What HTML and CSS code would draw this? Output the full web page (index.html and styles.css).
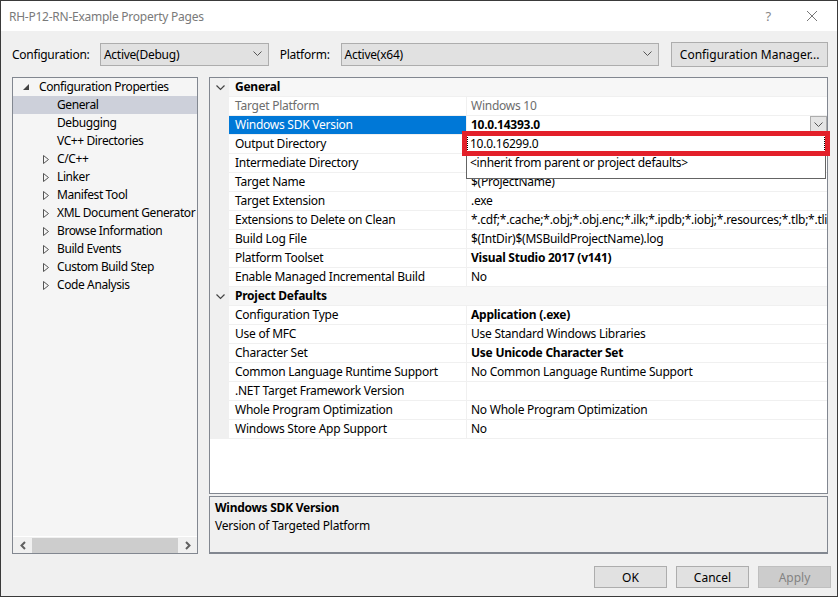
FILE: index.html
```html
<!DOCTYPE html>
<html lang="en">
  <head>
    <meta charset="UTF-8" />
    <title>RH-P12-RN-Example Property Pages</title>
    <link rel="stylesheet" href="styles.css">
  </head>
  <body>
    <div class="window">
      <header class="titlebar">
        <span class="title">RH-P12-RN-Example Property Pages</span>
        <span class="help">?</span>
        <svg class="close" width="12" height="12" viewBox="0 0 12 12">
          <path d="M1 1L11 11M11 1L1 11" stroke="#777" stroke-width="1" fill="none" />
        </svg>
      </header>

      <div class="content">
        <div class="toolbar">
          <label class="lbl-config">Configuration:</label>
          <div class="select select-config">
            <span>Active(Debug)</span>
            <svg width="9" height="6" viewBox="0 0 9 6"><path d="M0.5 0.5L4.5 4.5L8.5 0.5" stroke="#555" fill="none" /></svg>
          </div>
          <label class="lbl-platform">Platform:</label>
          <div class="select select-platform">
            <span>Active(x64)</span>
            <svg width="9" height="6" viewBox="0 0 9 6"><path d="M0.5 0.5L4.5 4.5L8.5 0.5" stroke="#555" fill="none" /></svg>
          </div>
          <button class="btn btn-manager">Configuration Manager...</button>
        </div>

        <div class="main">
          <aside class="tree">
            <ul>
              <li class="node root">
                <svg class="exp" width="7" height="7" viewBox="0 0 7 7"><polygon points="6,0 6,6 0,6" fill="#444" /></svg>
                Configuration Properties
              </li>
              <li class="node leaf selected">General</li>
              <li class="node leaf">Debugging</li>
              <li class="node leaf">VC++ Directories</li>
              <li class="node child"><svg class="col" width="6" height="9" viewBox="0 0 6 9"><polygon points="0.5,0.5 5.5,4.5 0.5,8.5" fill="none" stroke="#555" /></svg>C/C++</li>
              <li class="node child"><svg class="col" width="6" height="9" viewBox="0 0 6 9"><polygon points="0.5,0.5 5.5,4.5 0.5,8.5" fill="none" stroke="#555" /></svg>Linker</li>
              <li class="node child"><svg class="col" width="6" height="9" viewBox="0 0 6 9"><polygon points="0.5,0.5 5.5,4.5 0.5,8.5" fill="none" stroke="#555" /></svg>Manifest Tool</li>
              <li class="node child"><svg class="col" width="6" height="9" viewBox="0 0 6 9"><polygon points="0.5,0.5 5.5,4.5 0.5,8.5" fill="none" stroke="#555" /></svg>XML Document Generator</li>
              <li class="node child"><svg class="col" width="6" height="9" viewBox="0 0 6 9"><polygon points="0.5,0.5 5.5,4.5 0.5,8.5" fill="none" stroke="#555" /></svg>Browse Information</li>
              <li class="node child"><svg class="col" width="6" height="9" viewBox="0 0 6 9"><polygon points="0.5,0.5 5.5,4.5 0.5,8.5" fill="none" stroke="#555" /></svg>Build Events</li>
              <li class="node child"><svg class="col" width="6" height="9" viewBox="0 0 6 9"><polygon points="0.5,0.5 5.5,4.5 0.5,8.5" fill="none" stroke="#555" /></svg>Custom Build Step</li>
              <li class="node child"><svg class="col" width="6" height="9" viewBox="0 0 6 9"><polygon points="0.5,0.5 5.5,4.5 0.5,8.5" fill="none" stroke="#555" /></svg>Code Analysis</li>
            </ul>
            <div class="hscroll">
              <svg width="8" height="9" viewBox="0 0 8 9"><path d="M6 1L2.5 4.5L6 8" stroke="#606060" stroke-width="2" fill="none" /></svg>
              <div class="thumb"></div>
              <svg width="8" height="9" viewBox="0 0 8 9"><path d="M2 1L5.5 4.5L2 8" stroke="#606060" stroke-width="2" fill="none" /></svg>
            </div>
          </aside>

          <section class="right">
            <div class="grid">
              <div class="row cat">
                <div class="gutter"><svg width="9" height="6" viewBox="0 0 9 6"><path d="M0.5 0.5L4.5 4.5L8.5 0.5" stroke="#444" stroke-width="1.2" fill="none" /></svg></div>
                <div class="name">General</div>
                <div class="value"></div>
              </div>
              <div class="row readonly">
                <div class="gutter"></div>
                <div class="name">Target Platform</div>
                <div class="value">Windows 10</div>
              </div>
              <div class="row active">
                <div class="gutter"></div>
                <div class="name">Windows SDK Version</div>
                <div class="value"><b>10.0.14393.0</b>
                  <span class="dd-btn"><svg width="9" height="6" viewBox="0 0 9 6"><path d="M0.5 0.5L4.5 4.5L8.5 0.5" stroke="#555" fill="none" /></svg></span>
                </div>
              </div>
              <!-- values of these two rows are hidden under the open list -->
              <div class="row"><div class="gutter"></div><div class="name">Output Directory</div><div class="value"></div></div>
              <div class="row"><div class="gutter"></div><div class="name">Intermediate Directory</div><div class="value"></div></div>
              <div class="row"><div class="gutter"></div><div class="name">Target Name</div><div class="value">$(ProjectName)</div></div>
              <div class="row"><div class="gutter"></div><div class="name">Target Extension</div><div class="value">.exe</div></div>
              <div class="row"><div class="gutter"></div><div class="name">Extensions to Delete on Clean</div><div class="value">*.cdf;*.cache;*.obj;*.obj.enc;*.ilk;*.ipdb;*.iobj;*.resources;*.tlb;*.tli;*.tlh</div></div>
              <div class="row"><div class="gutter"></div><div class="name">Build Log File</div><div class="value">$(IntDir)$(MSBuildProjectName).log</div></div>
              <div class="row"><div class="gutter"></div><div class="name">Platform Toolset</div><div class="value"><b>Visual Studio 2017 (v141)</b></div></div>
              <div class="row"><div class="gutter"></div><div class="name">Enable Managed Incremental Build</div><div class="value">No</div></div>
              <div class="row cat">
                <div class="gutter"><svg width="9" height="6" viewBox="0 0 9 6"><path d="M0.5 0.5L4.5 4.5L8.5 0.5" stroke="#444" stroke-width="1.2" fill="none" /></svg></div>
                <div class="name">Project Defaults</div>
                <div class="value"></div>
              </div>
              <div class="row"><div class="gutter"></div><div class="name">Configuration Type</div><div class="value"><b>Application (.exe)</b></div></div>
              <div class="row"><div class="gutter"></div><div class="name">Use of MFC</div><div class="value">Use Standard Windows Libraries</div></div>
              <div class="row"><div class="gutter"></div><div class="name">Character Set</div><div class="value"><b>Use Unicode Character Set</b></div></div>
              <div class="row"><div class="gutter"></div><div class="name">Common Language Runtime Support</div><div class="value">No Common Language Runtime Support</div></div>
              <div class="row"><div class="gutter"></div><div class="name">.NET Target Framework Version</div><div class="value"></div></div>
              <div class="row"><div class="gutter"></div><div class="name">Whole Program Optimization</div><div class="value">No Whole Program Optimization</div></div>
              <div class="row"><div class="gutter"></div><div class="name">Windows Store App Support</div><div class="value">No</div></div>

              <!-- open dropdown list of the SDK version -->
              <ul class="dropdown">
                <li class="focused">10.0.16299.0</li>
                <li>&lt;inherit from parent or project defaults&gt;</li>
              </ul>
              <div class="mark"></div>
            </div>

            <div class="desc">
              <h4>Windows SDK Version</h4>
              <p>Version of Targeted Platform</p>
            </div>
          </section>
        </div>

        <footer class="buttons">
          <button class="btn">OK</button>
          <button class="btn">Cancel</button>
          <button class="btn" disabled>Apply</button>
        </footer>
      </div>
    </div>
  </body>
</html>
```
FILE: styles.css
```css
* {
  box-sizing: border-box;
}
body {
  margin: 0;
  font-family: "Noto Sans", "Open Sans", sans-serif;
  font-size: 12px;
  letter-spacing: -0.25px;
  color: #000;
  background: #f0f0f0;
}
.window {
  width: 838px;
  height: 597px;
  border: 1px solid #3a3a3a;
  display: flex;
  flex-direction: column;
  background: #f0f0f0;
  overflow: hidden;
}
.titlebar {
  height: 30px;
  background: #fff;
  display: flex;
  align-items: center;
  padding: 0 8px;
  flex-shrink: 0;
  .title {
    color: #7a7a7a;
    flex-grow: 1;
  }
  .help {
    color: #888;
    font-size: 13px;
    margin-right: 35px;
  }
  .close {
    margin-right: 11px;
  }
}
.content {
  flex-grow: 1;
  display: flex;
  flex-direction: column;
  padding: 10px 9px 0 11px;
}
.toolbar {
  display: flex;
  align-items: center;
  height: 26px;
  label {
    white-space: nowrap;
  }
  .lbl-config {
    width: 88px;
  }
  .lbl-platform {
    width: 61px;
    margin-left: 11px;
  }
}
.select {
  height: 23px;
  background: #e1e1e1;
  border: 1px solid #adadad;
  display: flex;
  align-items: center;
  justify-content: space-between;
  padding: 0 6px 0 3px;
  &.select-config {
    width: 169px;
  }
  &.select-platform {
    width: 319px;
  }
}
.btn {
  font: inherit;
  background: #e1e1e1;
  border: 1px solid #adadad;
  color: #000;
  padding: 0;
  &[disabled] {
    background: #cccccc;
    border-color: #bfbfbf;
    color: #838383;
  }
}
.btn-manager {
  width: 157px;
  height: 25px;
  margin-left: 12px;
}
.main {
  display: flex;
  gap: 11px;
  height: 477px;
  margin-top: 10px;
}
.tree {
  width: 186px;
  flex-shrink: 0;
  border: 1px solid #828790;
  background: #f5f5f5;
  display: flex;
  flex-direction: column;
  overflow: hidden;
  ul {
    list-style: none;
    margin: 0;
    padding: 0;
    flex-grow: 1;
  }
  .node {
    height: 18px;
    line-height: 18px;
    white-space: nowrap;
    letter-spacing: -0.4px;
    display: flex;
    align-items: center;
    svg {
      flex-shrink: 0;
    }
  }
  .root {
    padding-left: 10px;
    .exp {
      margin-right: 9px;
    }
  }
  .leaf {
    padding-left: 44px;
  }
  .child {
    padding-left: 30px;
    .col {
      margin-right: 8px;
    }
  }
  .selected {
    background: #cdd0da;
  }
}
.hscroll {
  height: 17px;
  display: flex;
  align-items: center;
  justify-content: space-between;
  padding: 0 5px 0 6px;
  background: #f0f0f0;
  border-top: 1px solid #fff;
  .thumb {
    height: 15px;
    flex-grow: 1;
    margin: 0 6px 0 5px;
    background: #cdcdcd;
  }
}
.right {
  flex-grow: 1;
  min-width: 0;
  display: flex;
  flex-direction: column;
  gap: 2px;
}
.grid {
  position: relative;
  height: 417px;
  border: 1px solid #828790;
  background: #fff;
}
.row {
  display: grid;
  grid-template-columns: 19px 238px minmax(0, 1fr);
  height: 19px;
  line-height: 18px;
  white-space: nowrap;
  .gutter {
    background: #f0f0f0;
    display: flex;
    align-items: center;
    justify-content: center;
    padding-left: 1px;
  }
  .name,
  .value {
    border-bottom: 1px solid #f0f0f0;
    overflow: hidden;
  }
  .name {
    padding-left: 6px;
    border-right: 1px solid #f0f0f0;
  }
  .value {
    padding-left: 4px;
    position: relative;
  }
  &.cat {
    .name,
    .value {
      background: #f7f7f7;
      border-right: 0;
    }
    .name {
      font-weight: bold;
    }
  }
  &.readonly {
    color: #6d6d6d;
  }
  &.active .name {
    background: #0078d7;
    color: #fff;
  }
}
.dd-btn {
  position: absolute;
  right: 0;
  top: 0;
  width: 17px;
  height: 18px;
  background: #e5e5e5;
  border: 1px solid #adadad;
  display: flex;
  align-items: center;
  justify-content: center;
}
.dropdown {
  position: absolute;
  left: 256px;
  top: 53px;
  width: 360px;
  height: 48px;
  margin: 0;
  padding: 3px 0 0;
  list-style: none;
  background: #fff;
  border: 1px solid #646464;
  li {
    height: 19px;
    line-height: 17px;
    padding-left: 3px;
  }
  .focused {
    outline: 1px dotted #000;
    outline-offset: -1px;
  }
}
.mark {
  position: absolute;
  left: 252px;
  top: 53px;
  width: 368px;
  height: 25px;
  border: 5px solid #e3202a;
}
.desc {
  height: 58px;
  border: 1px solid #828790;
  border-bottom-width: 2px;
  padding: 2px 5px;
  h4 {
    margin: 0;
    line-height: 18px;
    font-size: 12px;
  }
  p {
    margin: 0;
    line-height: 18px;
  }
}
.buttons {
  display: flex;
  justify-content: flex-end;
  gap: 9px;
  margin-top: 12px;
  margin-right: -3px;
  .btn {
    width: 73px;
    height: 22px;
  }
}
```
